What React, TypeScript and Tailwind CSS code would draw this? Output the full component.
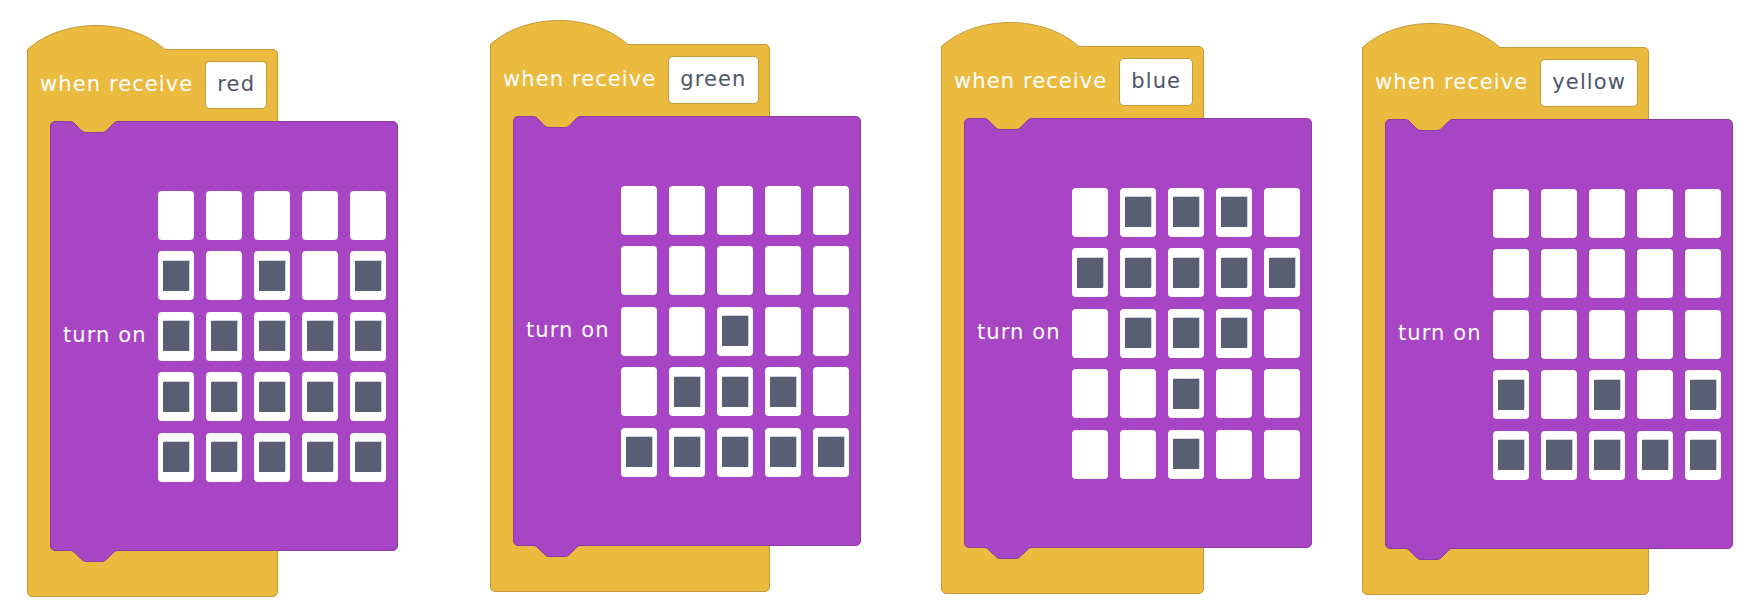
import React from 'react';

type BlockData = {
  label: string;
  place: string;
  pattern: string[];
};

const blocks: BlockData[] = [
  {
    label: 'red',
    place: 'mt-[24px]',
    pattern: ['00000', '10101', '11111', '11111', '11111'],
  },
  {
    label: 'green',
    place: 'ml-[92px] mt-[19px]',
    pattern: ['00000', '00000', '00100', '01110', '11111'],
  },
  {
    label: 'blue',
    place: 'ml-[80px] mt-[21px]',
    pattern: ['01110', '11111', '01110', '00100', '00100'],
  },
  {
    label: 'yellow',
    place: 'ml-[50px] mt-[22px]',
    pattern: ['00000', '00000', '00000', '10101', '11111'],
  },
];

const notch =
  'M0 0.5 C2.5 0.5 3.5 1.5 5 3 L10.5 8.5 C12 10 13.5 11.5 16 11.5 H32 C34.5 11.5 36 10 37.5 8.5 L43 3 C44.5 1.5 45.5 0.5 48 0.5';

function Hat() {
  return (
    <svg width="140" height="27" viewBox="0 0 140 27" className="relative z-10 -mb-[2px] block overflow-visible">
      <path d="M0 27 L0 25.5 C36 -6.5 102 -6.5 138 25.5 L138 27 Z" fill="#ebbb40" />
      <path d="M0.5 27 L0.5 25.5 C36 -6.5 102 -6.5 138 25.5" fill="none" stroke="#c29a37" />
    </svg>
  );
}

function Cell({ on }: { on: boolean }) {
  return (
    <div className="flex h-[49px] w-[36px] items-center justify-center rounded-[4px] bg-white">
      {on && <div className="h-[30px] w-[26px] bg-[#5a5e72] shadow-[1px_-1px_0_#cfd0d9]" />}
    </div>
  );
}

function TurnOn({ pattern }: { pattern: string[] }) {
  return (
    <div className="relative z-10 flex h-[430px] w-[348px] shrink-0 items-center justify-between rounded-[5px] border border-[#8b3ba2] bg-[#a845c4] pl-[12px] pr-[11px]">
      <svg width="48" height="13" viewBox="0 0 48 13" className="absolute left-[19px] top-[-1px] overflow-visible">
        <path d={`M0 0 L${notch.slice(1)} L48 0 Z`} fill="#ebbb40" />
        <path d={notch} fill="none" stroke="#8b3ba2" />
      </svg>
      <span className="text-[21px] tracking-[1.1px] text-white">turn on</span>
      <div className="grid grid-cols-[repeat(5,36px)] gap-x-[12px] gap-y-[11.5px]">
        {pattern.flatMap((row, r) =>
          row.split('').map((c, i) => <Cell key={`${r}-${i}`} on={c === '1'} />)
        )}
      </div>
      <svg width="48" height="13" viewBox="0 0 48 13" className="absolute left-[19px] top-full overflow-visible">
        <path d={`M0 0 L${notch.slice(1)} L48 0 Z`} fill="#a845c4" />
        <path d={notch} fill="none" stroke="#8b3ba2" />
      </svg>
    </div>
  );
}

function ReceiveBlock({ label, place, pattern }: BlockData) {
  return (
    <div className={`flex w-[371px] shrink-0 flex-col items-start ${place}`}>
      <Hat />
      <div className="flex w-fit flex-col rounded-b-[5px] rounded-tr-[5px] border border-[#c29a37] bg-[#ebbb40]">
        <div className="flex items-center gap-[12px] pb-[12px] pl-[12px] pr-[10px] pt-[11px]">
          <span className="whitespace-nowrap text-[21px] tracking-[1.1px] text-white">when receive</span>
          <span className="flex h-[48px] items-center rounded-[5px] border border-[#c29a37] bg-white px-[11px] text-[21px] tracking-[1.1px] text-[#4c5566]">
            {label}
          </span>
        </div>
        <div className="w-0 pl-[22px]">
          <TurnOn pattern={pattern} />
        </div>
        <div className="h-[45px]" />
      </div>
    </div>
  );
}

export default function App() {
  return (
    <div className="flex min-h-[614px] w-full items-start bg-white pl-[27px] font-['DejaVu_Sans',sans-serif]">
      {blocks.map((b) => (
        <ReceiveBlock key={b.label} {...b} />
      ))}
    </div>
  );
}
